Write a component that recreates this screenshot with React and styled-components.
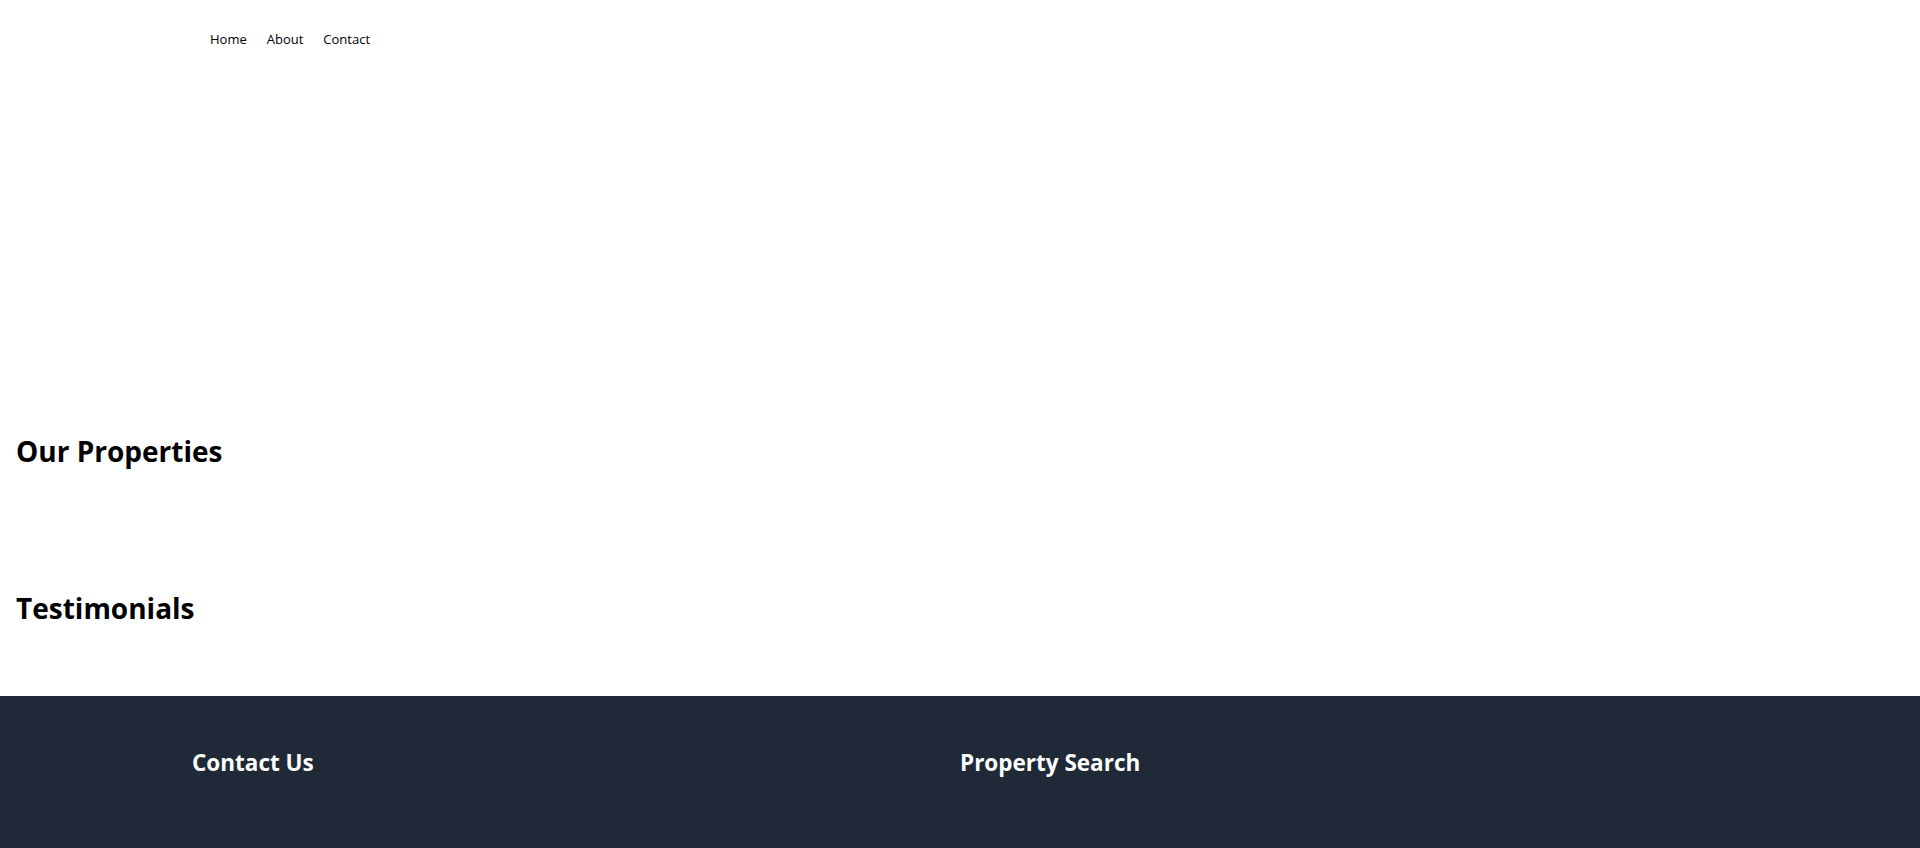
import React from 'react';
import styled, { createGlobalStyle } from 'styled-components';

const GlobalStyle = createGlobalStyle`
  * { box-sizing: border-box; }
  body {
    margin: 0;
    background: #ffffff;
    color: #000000;
    font-family: "Open Sans", "Noto Sans", "Liberation Sans", sans-serif;
  }
`;

const Header = styled.header`
  padding: 29px 0 16px;
`;

const Container = styled.div`
  max-width: 1536px;
  margin: 0 auto;
  padding: 0 18px;
`;

const Nav = styled.nav`
  display: flex;
  gap: 20px;
  font-size: 13px;
  line-height: 20px;
`;

const NavLink = styled.a`
  color: #000;
  text-decoration: none;
`;

// empty banner area between the nav and the first section
const Hero = styled.section`
  height: 317px;
`;

const Section = styled.section`
  padding: 51px 16px 49px;
`;

const Heading = styled.h2`
  margin: 0 0 21px;
  font-size: 28px;
  line-height: 36px;
  font-weight: 700;
`;

const Footer = styled.footer`
  background: #1f2937;
  color: #ffffff;
  padding: 53px 0 72px;
`;

const FooterGrid = styled.div`
  max-width: 1536px;
  margin: 0 auto;
  display: grid;
  grid-template-columns: 1fr 1fr;
`;

const FooterHeading = styled.h3`
  margin: 0 0 16px;
  font-size: 22.5px;
  line-height: 28px;
  font-weight: 700;
`;

export default function App() {
  return (
    <>
      <GlobalStyle />
      <Header>
        <Container>
          <Nav>
            <NavLink href="#">Home</NavLink>
            <NavLink href="#">About</NavLink>
            <NavLink href="#">Contact</NavLink>
          </Nav>
        </Container>
      </Header>
      <Hero />
      <Section>
        <Heading>Our Properties</Heading>
      </Section>
      <Section>
        <Heading>Testimonials</Heading>
      </Section>
      <Footer>
        <FooterGrid>
          <div>
            <FooterHeading>Contact Us</FooterHeading>
          </div>
          <div>
            <FooterHeading>Property Search</FooterHeading>
          </div>
        </FooterGrid>
      </Footer>
    </>
  );
}
